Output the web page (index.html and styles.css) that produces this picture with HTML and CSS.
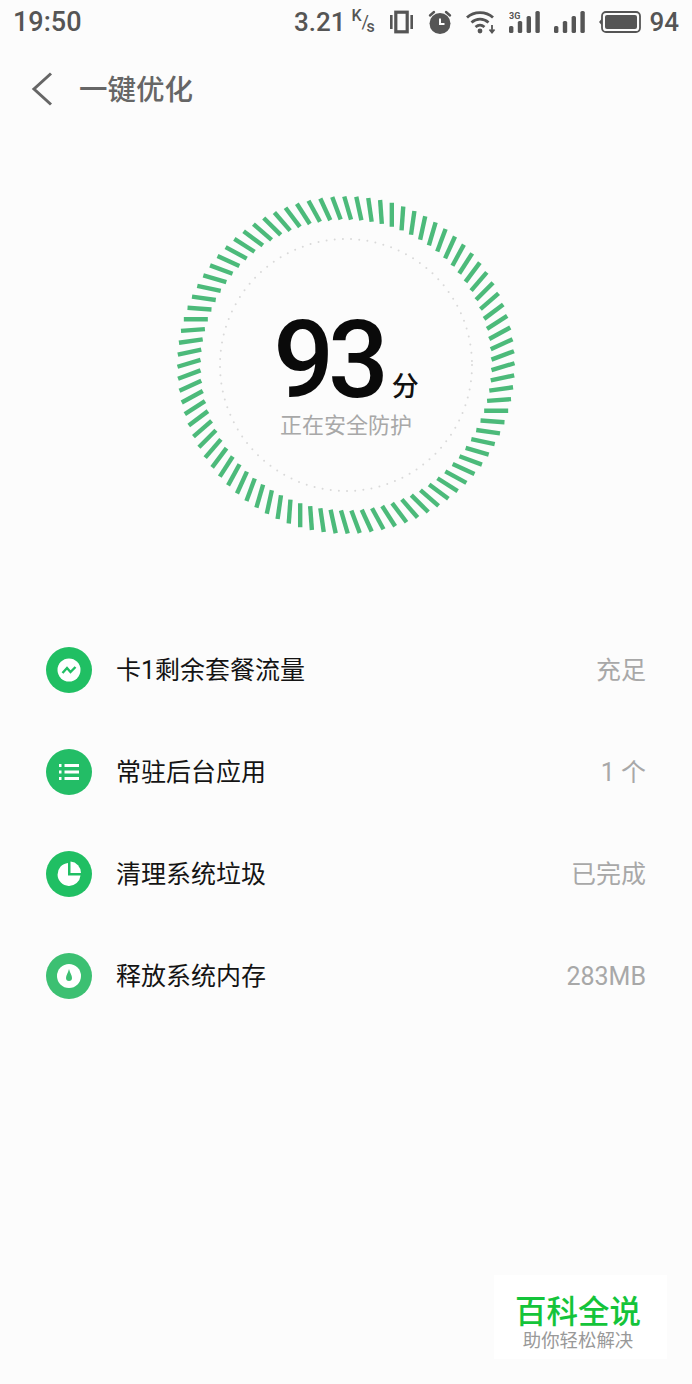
FILE: index.html
```html
<!DOCTYPE html>
<html lang="zh-CN">

<head>
    <meta charset="UTF-8">
    <meta name="viewport" content="width=device-width, initial-scale=1.0">
    <title>一键优化</title>
    <link rel="stylesheet" href="styles.css">
</head>

<body>
    <div class="status-bar">
        <span class="clock">19:50</span>
        <div class="status-right">
            <span class="speed">3.21</span>
            <span class="speed-unit"><span class="unit-k">K</span><span class="unit-slash">/</span><span class="unit-s">s</span></span>
            <svg class="icon-vibrate" width="23" height="24" viewBox="0 0 23 24">
                <rect x="5.8" y="2.2" width="11.4" height="19.6" fill="none" stroke="#555" stroke-width="3.2"/>
                <rect x="0" y="5" width="2.6" height="14" fill="#555"/>
                <rect x="20.4" y="5" width="2.6" height="14" fill="#555"/>
            </svg>
            <svg class="icon-alarm" width="24" height="24" viewBox="0 0 24 24">
                <circle cx="12" cy="13.5" r="10.5" fill="#555"/>
                <path d="M2 5.5 L6 2 M22 5.5 L18 2" stroke="#555" stroke-width="2.4" stroke-linecap="round"/>
                <path d="M12 8.5 V14 H16.5" fill="none" stroke="#fcfcfc" stroke-width="2"/>
            </svg>
            <svg class="icon-wifi" width="30" height="24" viewBox="0 0 30 24">
                <path d="M1 7.5 C8 1 20 1 27 7.5" fill="none" stroke="#555" stroke-width="2.8"/>
                <path d="M5.5 12.5 C10.5 8 17.5 8 22.5 12.5" fill="none" stroke="#555" stroke-width="2.8"/>
                <path d="M9.5 17 C12.5 14.5 15.5 14.5 18.5 17" fill="none" stroke="#555" stroke-width="2.8"/>
                <circle cx="14" cy="21" r="2.4" fill="#555"/>
                <path d="M26 15 V21 M23.5 19.5 L26 22.5 L28.5 19.5" fill="none" stroke="#555" stroke-width="1.8"/>
            </svg>
            <svg class="icon-signal" width="31" height="24" viewBox="0 0 31 24">
                <text x="0" y="9" class="net-label">3G</text>
                <rect x="0" y="16" width="4.4" height="7" rx="1.6" fill="#555"/>
                <rect x="8.8" y="11" width="4.4" height="12" rx="1.6" fill="#555"/>
                <rect x="17.6" y="6" width="4.4" height="17" rx="1.6" fill="#555"/>
                <rect x="26.4" y="1" width="4.4" height="22" rx="1.6" fill="#555"/>
            </svg>
            <svg class="icon-signal-2" width="31" height="24" viewBox="0 0 31 24">
                <rect x="0" y="16" width="4.4" height="7" rx="1.6" fill="#555"/>
                <rect x="8.8" y="11" width="4.4" height="12" rx="1.6" fill="#555"/>
                <rect x="17.6" y="6" width="4.4" height="17" rx="1.6" fill="#555"/>
                <rect x="26.4" y="1" width="4.4" height="22" rx="1.6" fill="#555"/>
            </svg>
            <svg class="icon-battery" width="42" height="22" viewBox="0 0 42 22">
                <path d="M0 11 L3 7.5 V14.5 Z" fill="#555"/>
                <rect x="3" y="1" width="38" height="20" rx="4" fill="none" stroke="#555" stroke-width="1.8"/>
                <rect x="6" y="4" width="32" height="14" rx="2" fill="#555"/>
            </svg>
            <span class="battery-level">94</span>
        </div>
    </div>

    <div class="title-bar">
        <svg class="back-icon" width="22" height="34" viewBox="0 0 22 34">
            <path d="M20 1.5 L3 17 L20 32.5" fill="none" stroke="#666" stroke-width="3"/>
        </svg>
        <h1 class="page-title">一键优化</h1>
    </div>

    <div class="score-section">
        <div class="score-ring">
            <svg class="ring-art" width="340" height="340" viewBox="0 0 340 340">
                <g id="ticks" stroke="#4cba7a" stroke-width="4.4"></g>
                <circle cx="170" cy="170" r="126" fill="none" stroke="#d9d9d9" stroke-width="2" stroke-linecap="round" stroke-dasharray="0 8.2"/>
            </svg>
            <div class="score-text">
                <div class="score-line"><span class="score-num">93</span><span class="score-unit">分</span></div>
                <div class="score-note">正在安全防护</div>
            </div>
        </div>
    </div>

    <ul class="check-list">
        <li class="check-row">
            <svg class="row-icon" width="46" height="46" viewBox="0 0 46 46">
                <circle cx="23" cy="23" r="23" fill="#20bf63"/>
                <circle cx="23" cy="23" r="11.5" fill="#fff"/>
                <path d="M16.5 26 L21 21 L24.5 25 L29.5 20" fill="none" stroke="#20bf63" stroke-width="2.4"/>
            </svg>
            <span class="row-name">卡1剩余套餐流量</span>
            <span class="row-value">充足</span>
        </li>
        <li class="check-row">
            <svg class="row-icon" width="46" height="46" viewBox="0 0 46 46">
                <circle cx="23" cy="23" r="23" fill="#23bd66"/>
                <path d="M13 16.5 H15.5 M18.5 16.5 H33 M13 23 H15.5 M18.5 23 H33 M13 29.5 H15.5 M18.5 29.5 H33" stroke="#fff" stroke-width="3"/>
            </svg>
            <span class="row-name">常驻后台应用</span>
            <span class="row-value">1 个</span>
        </li>
        <li class="check-row">
            <svg class="row-icon" width="46" height="46" viewBox="0 0 46 46">
                <circle cx="23" cy="23" r="23" fill="#20bf63"/>
                <path d="M22 12 A11.5 11.5 0 1 0 34.5 24.5 H22 Z" fill="#fff"/>
                <path d="M24.5 10.5 A11.5 11.5 0 0 1 35 22 H24.5 Z" fill="#fff"/>
            </svg>
            <span class="row-name">清理系统垃圾</span>
            <span class="row-value">已完成</span>
        </li>
        <li class="check-row">
            <svg class="row-icon" width="46" height="46" viewBox="0 0 46 46">
                <circle cx="23" cy="23" r="23" fill="#3cc072"/>
                <circle cx="23" cy="23" r="12" fill="#fff"/>
                <path d="M23 16 C24 20 26 22 26 25 A3 3 0 0 1 20 25 C20 22 22 20 23 16 Z" fill="#3cc072"/>
            </svg>
            <span class="row-name">释放系统内存</span>
            <span class="row-value">283MB</span>
        </li>
    </ul>

    <div class="watermark">
        <div class="watermark-name">百科全说</div>
        <div class="watermark-slogan">助你轻松解决</div>
    </div>

    <script src="ring.js"></script>
</body>

</html>
```

FILE: styles.css
```css
* {
    margin: 0;
    padding: 0;
    box-sizing: border-box;
}

body {
    position: relative;
    height: 1384px;
    overflow: hidden;
    background-color: #fcfcfc;
    font-family: Roboto, "Noto Sans CJK SC", sans-serif;
}

.status-bar {
    height: 44px;
    display: flex;
    align-items: center;
    justify-content: space-between;
    padding: 0 13px;
    color: #555;
    font-size: 26px;
    font-weight: 500;
}

.clock {
    font-size: 27px;
}

.status-right {
    display: flex;
    align-items: center;
}

.speed {
    margin-right: 6px;
}

.speed-unit {
    position: relative;
    width: 24px;
    height: 24px;
    font-size: 16px;
    font-weight: 500;
    margin-right: 15px;
}

.unit-k,
.unit-slash,
.unit-s {
    position: absolute;
    line-height: 18px;
}

.unit-k {
    left: 0;
    top: -3px;
}

.unit-slash {
    left: 10px;
    top: 3px;
    font-size: 18px;
    font-weight: 400;
}

.unit-s {
    left: 15px;
    top: 8px;
}

.icon-vibrate {
    margin-right: 15px;
}

.icon-alarm {
    margin-right: 14px;
}

.icon-wifi {
    margin-right: 13px;
}

.icon-signal {
    margin-right: 14px;
}

.icon-signal-2 {
    margin-right: 14px;
}

.icon-battery {
    margin-right: 8px;
}

.net-label {
    font-size: 9px;
    font-weight: 700;
    fill: #555;
    font-family: Roboto, sans-serif;
}

.title-bar {
    height: 90px;
    display: flex;
    align-items: center;
    padding-left: 31px;
}

.back-icon {
    margin-right: 26px;
}

.page-title {
    font-family: "Noto Sans CJK SC", sans-serif;
    font-size: 28.5px;
    line-height: 40px;
    margin-bottom: 2px;
    font-weight: 500;
    color: #666;
}

.score-section {
    display: flex;
    justify-content: center;
    padding-top: 61px;
}

.score-ring {
    position: relative;
    width: 340px;
    height: 340px;
}

.ring-art {
    display: block;
}

.score-text {
    position: absolute;
    left: 0;
    right: 0;
    top: 126px;
    text-align: center;
}

.score-line {
    display: flex;
    justify-content: center;
    align-items: flex-end;
    height: 80px;
}

.score-num {
    font-size: 107px;
    font-weight: 500;
    line-height: 80px;
    letter-spacing: -6px;
    color: #0a0a0a;
}

.score-unit {
    font-family: "Noto Sans CJK SC", sans-serif;
    font-size: 27px;
    line-height: 30px;
    margin-bottom: 1px;
    font-weight: 500;
    color: #111;
    margin-left: 9px;
}

.score-note {
    margin-top: 7px;
    font-family: "Noto Sans CJK SC", sans-serif;
    font-size: 22px;
    line-height: 30px;
    color: #a8a8a8;
}

.check-list {
    list-style: none;
    margin-top: 84px;
    padding: 0 46px;
}

.check-row {
    height: 102px;
    display: flex;
    align-items: center;
    font-family: Roboto, "Noto Sans CJK SC", sans-serif;
}

.row-icon {
    flex: none;
    margin-right: 24px;
}

.row-name {
    flex: 1;
    font-size: 25px;
    line-height: 34px;
    margin-top: 2px;
    color: #141414;
}

.row-value {
    font-size: 25px;
    line-height: 34px;
    margin-top: 2px;
    color: #a8a8a8;
}

.watermark {
    position: absolute;
    left: 494px;
    top: 1275px;
    width: 173px;
    height: 84px;
    padding-right: 5px;
    background-color: #fff;
    text-align: center;
    font-family: "Noto Sans CJK SC", sans-serif;
}

.watermark-name {
    margin-top: 15px;
    font-size: 31.5px;
    line-height: 38px;
    font-weight: 500;
    color: #14c43a;
}

.watermark-slogan {
    font-size: 18.4px;
    line-height: 22px;
    color: #999;
}
```

FILE: ring.js
```js
// draws the slanted ticks of the score ring
const ticks = document.getElementById('ticks');
const count = 88;

for (let i = 0; i < count; i++) {
    const line = document.createElementNS('http://www.w3.org/2000/svg', 'line');
    const angle = i * 360 / count + 0.6;
    line.setAttribute('x1', 170);
    line.setAttribute('y1', 1);
    line.setAttribute('x2', 170);
    line.setAttribute('y2', 25);
    line.setAttribute('transform', `rotate(${angle} 170 170) rotate(-17 170 13)`);
    ticks.appendChild(line);
}
```
